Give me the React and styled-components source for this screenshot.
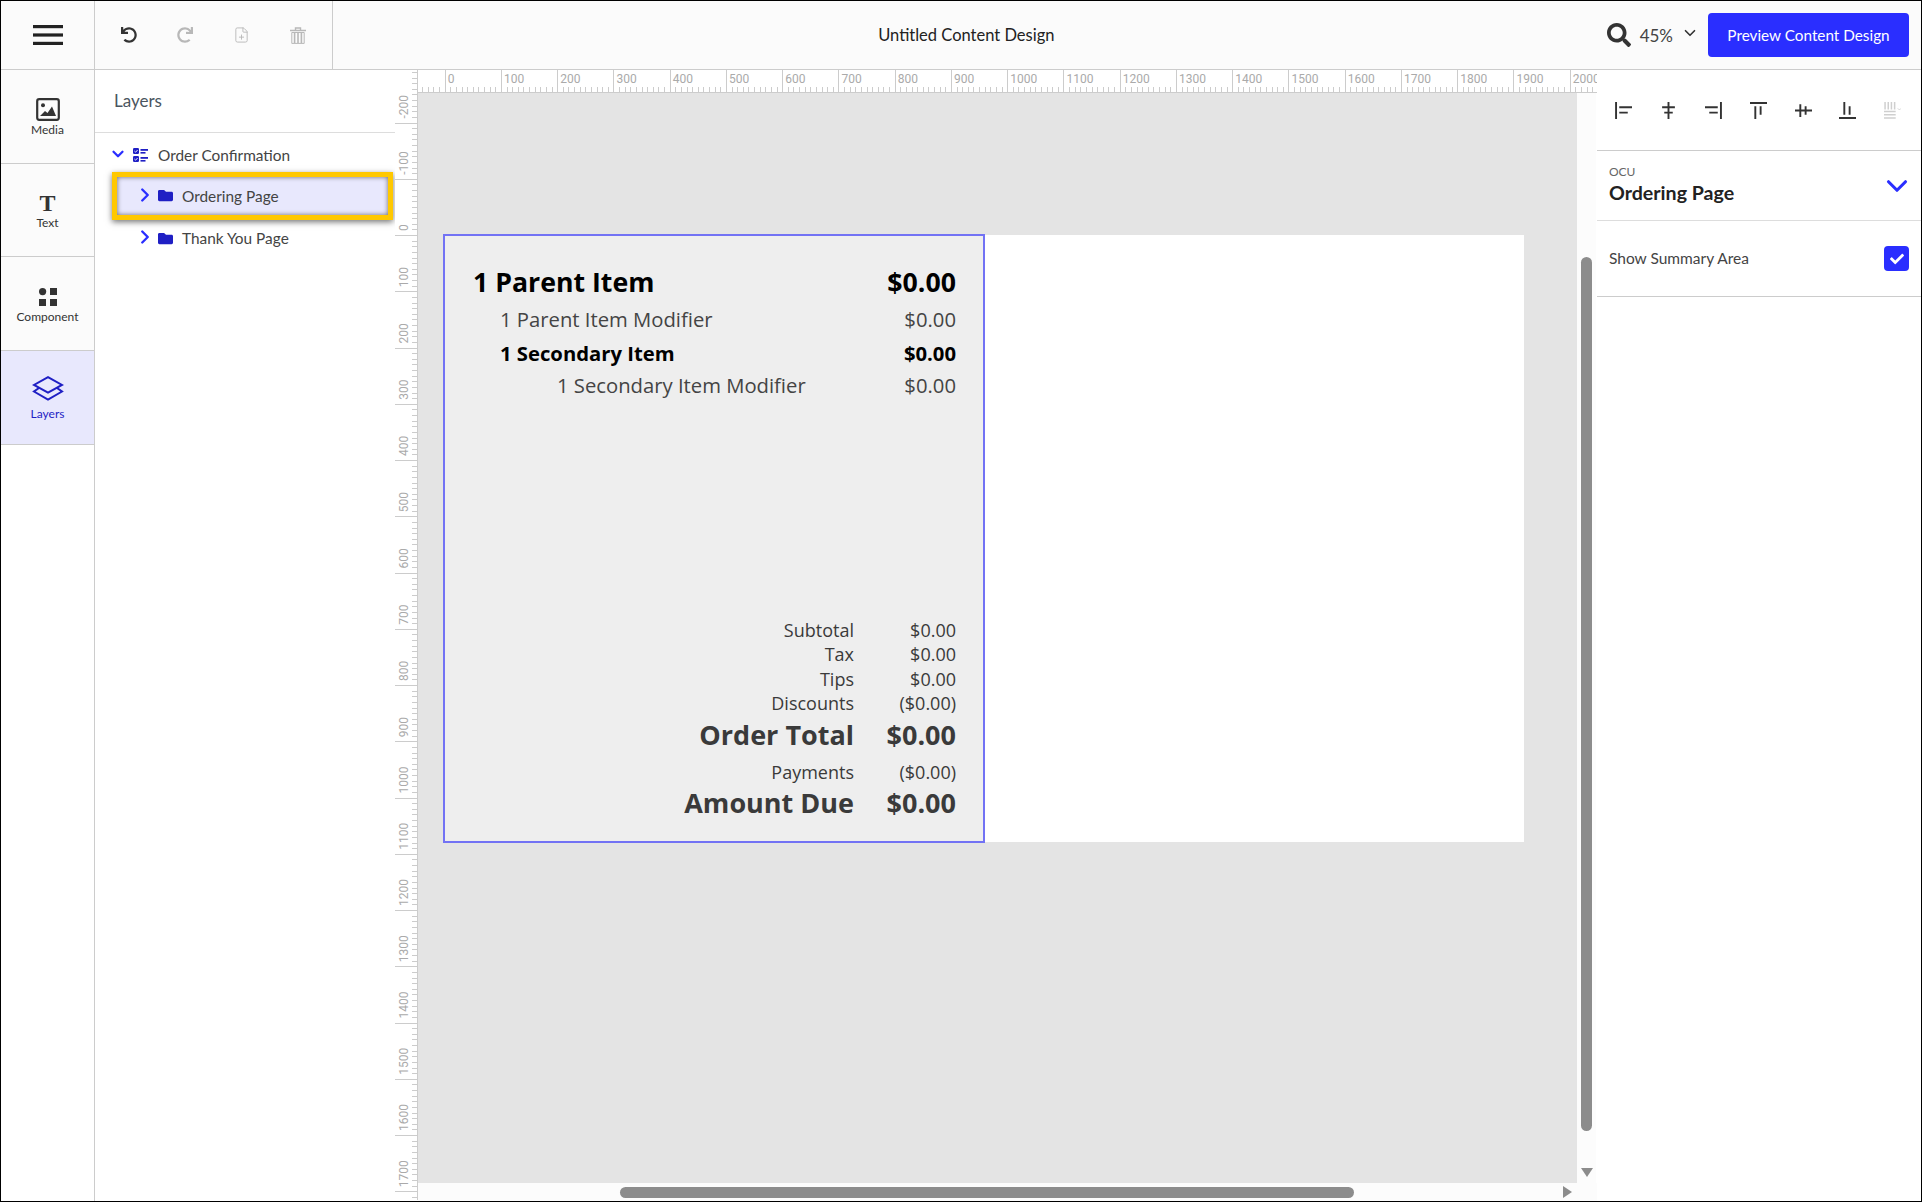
import { ChevronDown, ChevronRight, FilePlus } from "lucide-react";
import { FaCheck, FaFolder, FaRedo, FaSearch, FaUndo } from "react-icons/fa";
import styled, { createGlobalStyle } from "styled-components";

const UI_FONT = `Lato, "Noto Sans", sans-serif`;
const RECEIPT_FONT = `"Open Sans", "Noto Sans", sans-serif`;
const BLUE = "#2a2eff";
const DARK_BLUE = "#1f1fc4";
const LINE = "#cccccc";

const RULER_STEP = 5.625;

const GlobalStyle = createGlobalStyle`
  html, body, #root {
    height: 100%;
    margin: 0;
  }
  body {
    font-family: ${UI_FONT};
    background: #fff;
    overflow: hidden;
  }
`;

const Frame = styled.div`
  box-sizing: border-box;
  width: 1922px;
  height: 1202px;
  border: 1px solid #000;
  display: flex;
  flex-direction: column;
  background: #fff;
`;

const TopBar = styled.header`
  flex: 0 0 69px;
  box-sizing: border-box;
  display: flex;
  align-items: stretch;
  background: #fbfbfb;
  border-bottom: 1px solid ${LINE};
`;

const MenuCell = styled.div`
  box-sizing: border-box;
  width: 94px;
  display: flex;
  align-items: center;
  justify-content: center;
  border-right: 1px solid ${LINE};
`;

const ToolCell = styled.div`
  box-sizing: border-box;
  width: 238px;
  padding-left: 25.5px;
  display: flex;
  align-items: center;
  gap: 39.3px;
  border-right: 1px solid ${LINE};
`;

const ToolIcon = styled.span`
  width: 17px;
  height: 17px;
  display: flex;
  align-items: center;
  justify-content: center;
  color: ${(props) => (props.$off ? "#b8b8b8" : "#333")};
`;

const Title = styled.div`
  flex: 1;
  align-self: center;
  padding-right: 7px;
  text-align: center;
  font-size: 16.5px;
  color: #222;
`;

const ZoomGroup = styled.div`
  display: flex;
  align-items: center;
  padding-right: 12px;
`;

const ZoomValue = styled.span`
  margin-left: 9px;
  font-size: 17px;
  color: #444;
`;

const ZoomCaret = styled.span`
  display: flex;
  margin: -4px 9px 0 8px;
  color: #333;
`;

const PreviewButton = styled.button`
  width: 201px;
  height: 44px;
  padding: 0;
  border: 0;
  border-radius: 4px;
  background: ${BLUE};
  color: #fff;
  font-family: ${UI_FONT};
  font-size: 15.3px;
`;

const Workspace = styled.div`
  flex: 1;
  min-height: 0;
  display: flex;
`;

const Rail = styled.nav`
  box-sizing: border-box;
  width: 94px;
  border-right: 1px solid ${LINE};
`;

const RailItem = styled.div`
  box-sizing: border-box;
  height: ${(props) => props.$height}px;
  padding-top: ${(props) => props.$shift}px;
  display: flex;
  flex-direction: column;
  align-items: center;
  justify-content: center;
  gap: ${(props) => props.$gap}px;
  border-bottom: 1px solid ${LINE};
  background: ${(props) => (props.$active ? "#e8e8fd" : "#fbfbfb")};
  color: ${(props) => (props.$active ? DARK_BLUE : "#333")};
  font-size: 12px;
`;

const TextGlyph = styled.span`
  font-family: "Liberation Serif", serif;
  font-weight: 700;
  font-size: 24px;
  line-height: 24px;
  color: #333;
`;

const LayersPanel = styled.aside`
  width: 300px;
  display: flex;
  flex-direction: column;
`;

const PanelHeading = styled.div`
  flex: 0 0 63px;
  box-sizing: border-box;
  padding: 0 0 2px 19px;
  display: flex;
  align-items: center;
  border-bottom: 1px solid #dddddd;
  font-size: 17px;
  color: #4a5560;
`;

const Tree = styled.div`
  padding-top: 4px;
`;

const TreeRow = styled.div`
  display: flex;
  align-items: center;
  height: ${(props) => props.$height}px;
  padding-left: ${(props) => props.$indent}px;
  font-size: 15.4px;
  color: #444;
`;

const HighlightRow = styled.div`
  box-sizing: border-box;
  width: 281px;
  height: 48px;
  margin-left: 17px;
  padding: 0 0 1px 17px;
  display: flex;
  align-items: center;
  border: 5px solid #ffc800;
  background: #e8e8fd;
  box-shadow: 0 2px 6px rgba(0, 0, 0, 0.55), inset 0 0 5px rgba(0, 0, 0, 0.55);
  font-size: 15.4px;
  color: #444;
`;

const Chevron = styled.span`
  display: flex;
  color: ${BLUE};
  margin-right: ${(props) => props.$gap}px;
  margin-top: -2px;
`;

const NodeIcon = styled.span`
  display: flex;
  color: ${DARK_BLUE};
  margin-right: ${(props) => props.$gap}px;
`;

const VerticalRuler = styled.div`
  flex: 0 0 23px;
  background: #fff;
`;

const CenterColumn = styled.main`
  flex: 0 0 1179px;
  min-width: 0;
  display: flex;
  flex-direction: column;
`;

const RulerRow = styled.div`
  flex: 0 0 23px;
  overflow: hidden;
`;

const CanvasRow = styled.div`
  flex: 1;
  min-height: 0;
  display: flex;
`;

const Canvas = styled.div`
  flex: 1;
  padding: 142px 0 0 25px;
  background: #e4e4e4;
`;

const ContentPage = styled.div`
  width: 1081px;
  height: 607px;
  display: flex;
  align-items: flex-start;
  background: #fff;
`;

const SummaryBox = styled.section`
  box-sizing: border-box;
  flex: none;
  width: 542px;
  height: 609px;
  margin-top: -1px;
  padding: 26px 27px 20px 28px;
  display: flex;
  flex-direction: column;
  justify-content: space-between;
  border: 2px solid #7272f4;
  background: #eeeeee;
  font-family: ${RECEIPT_FONT};
`;

const ItemLine = styled.div`
  display: flex;
  justify-content: space-between;
  align-items: center;
  height: ${(props) => props.$height}px;
  padding-left: ${(props) => props.$indent || 0}px;
  font-size: ${(props) => props.$size}px;
  font-weight: ${(props) => (props.$bold ? 700 : 400)};
  color: ${(props) => (props.$bold ? "#000" : "#444")};
`;

const Totals = styled.div`
  display: grid;
  grid-template-columns: 1fr 102px;
  color: #3a3a3a;
`;

const TotalCell = styled.div`
  display: flex;
  align-items: center;
  justify-content: flex-end;
  height: ${(props) => props.$height}px;
  margin-bottom: ${(props) => props.$after || 0}px;
  font-size: ${(props) => props.$size}px;
  font-weight: ${(props) => (props.$bold ? 700 : 400)};
`;

const VScroll = styled.div`
  flex: 0 0 19px;
  box-sizing: border-box;
  display: flex;
  flex-direction: column;
  align-items: center;
  padding-top: 164px;
  margin-right: 1px;
  background: #fcfcfc;
`;

const VThumb = styled.div`
  width: 11px;
  height: 874px;
  border-radius: 6px;
  background: #8c8c8c;
`;

const DownArrow = styled.div`
  margin-top: 37px;
  width: 0;
  height: 0;
  border-left: 6px solid transparent;
  border-right: 6px solid transparent;
  border-top: 9px solid #8c8c8c;
`;

const HScroll = styled.div`
  flex: 0 0 18px;
  display: flex;
  align-items: center;
  padding-left: 202px;
  background: #fcfcfc;
`;

const HThumb = styled.div`
  width: 734px;
  height: 11px;
  border-radius: 6px;
  background: #8c8c8c;
`;

const RightArrow = styled.div`
  margin-left: 209px;
  width: 0;
  height: 0;
  border-top: 6px solid transparent;
  border-bottom: 6px solid transparent;
  border-left: 9px solid #8c8c8c;
`;

const RightPanel = styled.aside`
  flex: 1;
  min-width: 0;
`;

const AlignBar = styled.div`
  box-sizing: border-box;
  height: 81px;
  padding-left: 18px;
  display: flex;
  align-items: center;
  gap: 27.9px;
  border-bottom: 1px solid ${LINE};
`;

const PageHeading = styled.div`
  box-sizing: border-box;
  height: 70px;
  padding: 13px 7px 0 12px;
  display: flex;
  justify-content: space-between;
  border-bottom: 1px solid #dddddd;
`;

const Crumb = styled.div`
  font-size: 12px;
  line-height: 16px;
  color: #666;
`;

const PageName = styled.div`
  font-size: 19.6px;
  line-height: 26px;
  font-weight: 700;
  color: #222;
`;

const HeadingCaret = styled.span`
  display: flex;
  align-self: center;
  margin-top: -12px;
  color: ${BLUE};
`;

const OptionRow = styled.div`
  box-sizing: border-box;
  height: 76px;
  padding: 0 12px;
  display: flex;
  align-items: center;
  justify-content: space-between;
  border-bottom: 1px solid ${LINE};
  font-size: 15.5px;
  color: #444;
`;

const OptionLabel = styled.span`
  margin-bottom: 2px;
`;

const Checkbox = styled.span`
  width: 25px;
  height: 25px;
  display: flex;
  align-items: center;
  justify-content: center;
  border-radius: 4px;
  background: ${BLUE};
  color: #fff;
`;

const Hamburger = () => (
  <svg width="30" height="20" viewBox="0 0 30 20">
    <rect y="0" width="30" height="3.2" fill="#222" />
    <rect y="8.4" width="30" height="3.2" fill="#222" />
    <rect y="16.8" width="30" height="3.2" fill="#222" />
  </svg>
);

const TrashIcon = () => (
  <svg width="16" height="17" viewBox="0 0 16 17" fill="none" stroke="currentColor">
    <path d="M0 3.5h16M5.5 3V1h5v2" strokeWidth="1.4" />
    <path d="M1.8 5.5h12.4V16.4H1.8z" strokeWidth="1" />
    <path d="M4.6 6v10M8 6v10M11.4 6v10" strokeWidth="1.6" />
  </svg>
);

const MediaIcon = () => (
  <svg width="24" height="23" viewBox="0 0 24 23">
    <rect x="1.2" y="1.2" width="21.6" height="20.6" rx="2" fill="none" stroke="#333" strokeWidth="2.2" />
    <circle cx="7" cy="7.2" r="2" fill="#333" />
    <path d="M4 18l5-5 2.5 2 4.5-6.5L20 18z" fill="#333" />
  </svg>
);

const ComponentIcon = () => (
  <svg width="18" height="18" viewBox="0 0 18 18" fill="#333">
    <circle cx="3.6" cy="3.6" r="3.6" />
    <rect x="11" y="0" width="7" height="7" />
    <rect x="0" y="11" width="7" height="7" />
    <rect x="11" y="11" width="7" height="7" />
  </svg>
);

const LayersIcon = () => (
  <svg width="32" height="25" viewBox="0 0 32 25" fill="none" stroke={DARK_BLUE} strokeWidth="2">
    <path d="M16 1.2L30 9 16 16.6 2 9z" />
    <path d="M7 12L2 15.5 16 23.6l14-8.1L25 12" />
  </svg>
);

const ChecklistIcon = () => (
  <svg width="15" height="14" viewBox="0 0 15 14" fill="currentColor">
    <rect x="0" y="0" width="6" height="6" rx="1.2" />
    <rect x="0" y="8" width="6" height="6" rx="1.2" />
    <rect x="7.5" y="1" width="7.5" height="1.8" />
    <rect x="7.5" y="4" width="5" height="1.6" />
    <rect x="7.5" y="9" width="7.5" height="1.8" />
    <rect x="7.5" y="12" width="5" height="1.6" />
    <path d="M1.4 3l1.2 1.2 2-2.2M1.4 11l1.2 1.2 2-2.2" fill="none" stroke="#fff" strokeWidth="0.9" />
  </svg>
);

const alignShapes = [
  "M1 0v16M4 5h12M4 10h8",
  "M8 0v16M2 5h12M4 10h8",
  "M15 0v16M0 5h12M4 10h8",
  "M0 1h16M5 4v12M10 4v8",
  "M0 8h16M5 2v12M10 4v8",
  "M0 15h16M5 0v12M10 4v8",
];

const AlignIcon = ({ d }) => (
  <svg width="17" height="17" viewBox="0 0 16 16" fill="none" stroke="#333" strokeWidth="1.8">
    <path d={d} />
  </svg>
);

const DistributeIcon = () => (
  <svg width="17" height="17" viewBox="0 0 16 16" fill="none" stroke="#cfcfcf" strokeWidth="1.4">
    <path d="M1 0v7M4 0v7M7 0v7M10 0v7M0 9h11M0 12h11M0 15h11" />
    <path d="M13 6l1.5 1.5L16 6" strokeWidth="0.8" />
  </svg>
);

const HorizontalRuler = () => {
  const origin = 26.7;
  const ticks = [];
  for (let n = -4; n <= 205; n++) {
    const x = Math.round(origin + n * RULER_STEP) + 0.5;
    const major = n % 10 === 0;
    ticks.push(
      <line key={n} x1={x} x2={x} y1={major ? 0 : 17} y2={22} stroke={LINE} />,
    );
  }
  const labels = [];
  for (let n = 0; n <= 20; n++) {
    labels.push(
      <text key={n} x={origin + n * 56.25 + 3} y={12.5} fontFamily="Roboto" fontSize="12" fill="#aaa">
        {n * 100}
      </text>,
    );
  }
  return (
    <svg width="1179" height="23" style={{ display: "block" }} shapeRendering="crispEdges">
      <line x1="0" x2="1179" y1="22.5" y2="22.5" stroke={LINE} />
      {ticks}
      {labels}
    </svg>
  );
};

const SideRuler = () => {
  const origin = 165;
  const ticks = [];
  for (let n = -29; n <= 180; n++) {
    const y = Math.round(origin + n * RULER_STEP) + 0.5;
    const major = n % 10 === 0;
    ticks.push(
      <line key={n} x1={major ? 0 : 17} x2={22} y1={y} y2={y} stroke={LINE} />,
    );
  }
  const labels = [];
  for (let n = -2; n <= 17; n++) {
    const y = origin + n * 56.25 - 4;
    labels.push(
      <text key={n} transform={`translate(12.5 ${y}) rotate(-90)`} fontFamily="Roboto" fontSize="12" fill="#aaa">
        {n * 100}
      </text>,
    );
  }
  return (
    <svg width="23" height="1130" style={{ display: "block" }} shapeRendering="crispEdges">
      <line x1="22.5" x2="22.5" y1="0" y2="1130" stroke={LINE} />
      {ticks}
      {labels}
    </svg>
  );
};

const totals = [
  { label: "Subtotal", value: "$0.00", height: 24.5, size: 18 },
  { label: "Tax", value: "$0.00", height: 24.5, size: 18 },
  { label: "Tips", value: "$0.00", height: 24.5, size: 18 },
  { label: "Discounts", value: "($0.00)", height: 24.5, size: 18 },
  { label: "Order Total", value: "$0.00", height: 36.8, size: 27, bold: true, after: 7.3 },
  { label: "Payments", value: "($0.00)", height: 24.5, size: 18 },
  { label: "Amount Due", value: "$0.00", height: 36.8, size: 27, bold: true },
];

export default function App() {
  return (
    <Frame>
      <GlobalStyle />
      <TopBar>
        <MenuCell>
          <Hamburger />
        </MenuCell>
        <ToolCell>
          <ToolIcon><FaUndo size={16} /></ToolIcon>
          <ToolIcon $off><FaRedo size={16} /></ToolIcon>
          <ToolIcon $off><FilePlus size={20} strokeWidth={1.3} /></ToolIcon>
          <ToolIcon $off><TrashIcon /></ToolIcon>
        </ToolCell>
        <Title>Untitled Content Design</Title>
        <ZoomGroup>
          <FaSearch size={24} color="#333" />
          <ZoomValue>45%</ZoomValue>
          <ZoomCaret><ChevronDown size={18} strokeWidth={2.2} /></ZoomCaret>
          <PreviewButton>Preview Content Design</PreviewButton>
        </ZoomGroup>
      </TopBar>
      <Workspace>
        <Rail>
          <RailItem $height={94} $shift={2} $gap={1}>
            <MediaIcon />
            Media
          </RailItem>
          <RailItem $height={93} $shift={1} $gap={0}>
            <TextGlyph>T</TextGlyph>
            Text
          </RailItem>
          <RailItem $height={94} $shift={4} $gap={3}>
            <ComponentIcon />
            Component
          </RailItem>
          <RailItem $active $height={94} $shift={1} $gap={5}>
            <LayersIcon />
            Layers
          </RailItem>
        </Rail>
        <LayersPanel>
          <PanelHeading>Layers</PanelHeading>
          <Tree>
            <TreeRow $height={35} $indent={14}>
              <Chevron $gap={6}><ChevronDown size={18} strokeWidth={3} /></Chevron>
              <NodeIcon $gap={10}><ChecklistIcon /></NodeIcon>
              Order Confirmation
            </TreeRow>
            <HighlightRow>
              <Chevron $gap={2}><ChevronRight size={22} strokeWidth={2.6} /></Chevron>
              <NodeIcon $gap={9}><FaFolder size={15} /></NodeIcon>
              Ordering Page
            </HighlightRow>
            <TreeRow $height={36} $indent={39}>
              <Chevron $gap={2}><ChevronRight size={22} strokeWidth={2.6} /></Chevron>
              <NodeIcon $gap={9}><FaFolder size={15} /></NodeIcon>
              Thank You Page
            </TreeRow>
          </Tree>
        </LayersPanel>
        <VerticalRuler>
          <SideRuler />
        </VerticalRuler>
        <CenterColumn>
          <RulerRow>
            <HorizontalRuler />
          </RulerRow>
          <CanvasRow>
            <Canvas>
              <ContentPage>
                <SummaryBox>
                  <div>
                    <ItemLine $height={38} $size={26.7} $bold>
                      <span>1 Parent Item</span>
                      <span>$0.00</span>
                    </ItemLine>
                    <ItemLine $height={37} $size={20.25} $indent={27}>
                      <span>1 Parent Item Modifier</span>
                      <span>$0.00</span>
                    </ItemLine>
                    <ItemLine $height={32} $size={20.25} $indent={27} $bold>
                      <span>1 Secondary Item</span>
                      <span>$0.00</span>
                    </ItemLine>
                    <ItemLine $height={32} $size={20.25} $indent={84}>
                      <span>1 Secondary Item Modifier</span>
                      <span>$0.00</span>
                    </ItemLine>
                  </div>
                  <Totals>
                    {totals.flatMap(({ label, value, height, size, bold, after }) => [
                      <TotalCell key={label} $height={height} $size={size} $bold={bold} $after={after}>{label}</TotalCell>,
                      <TotalCell key={`${label}-value`} $height={height} $size={size} $bold={bold} $after={after}>{value}</TotalCell>,
                    ])}
                  </Totals>
                </SummaryBox>
              </ContentPage>
            </Canvas>
            <VScroll>
              <VThumb />
              <DownArrow />
            </VScroll>
          </CanvasRow>
          <HScroll>
            <HThumb />
            <RightArrow />
          </HScroll>
        </CenterColumn>
        <RightPanel>
          <AlignBar>
            {alignShapes.map((d) => (
              <AlignIcon key={d} d={d} />
            ))}
            <DistributeIcon />
          </AlignBar>
          <PageHeading>
            <div>
              <Crumb>OCU</Crumb>
              <PageName>Ordering Page</PageName>
            </div>
            <HeadingCaret><ChevronDown size={34} strokeWidth={2.2} /></HeadingCaret>
          </PageHeading>
          <OptionRow>
            <OptionLabel>Show Summary Area</OptionLabel>
            <Checkbox><FaCheck size={14} /></Checkbox>
          </OptionRow>
        </RightPanel>
      </Workspace>
    </Frame>
  );
}
